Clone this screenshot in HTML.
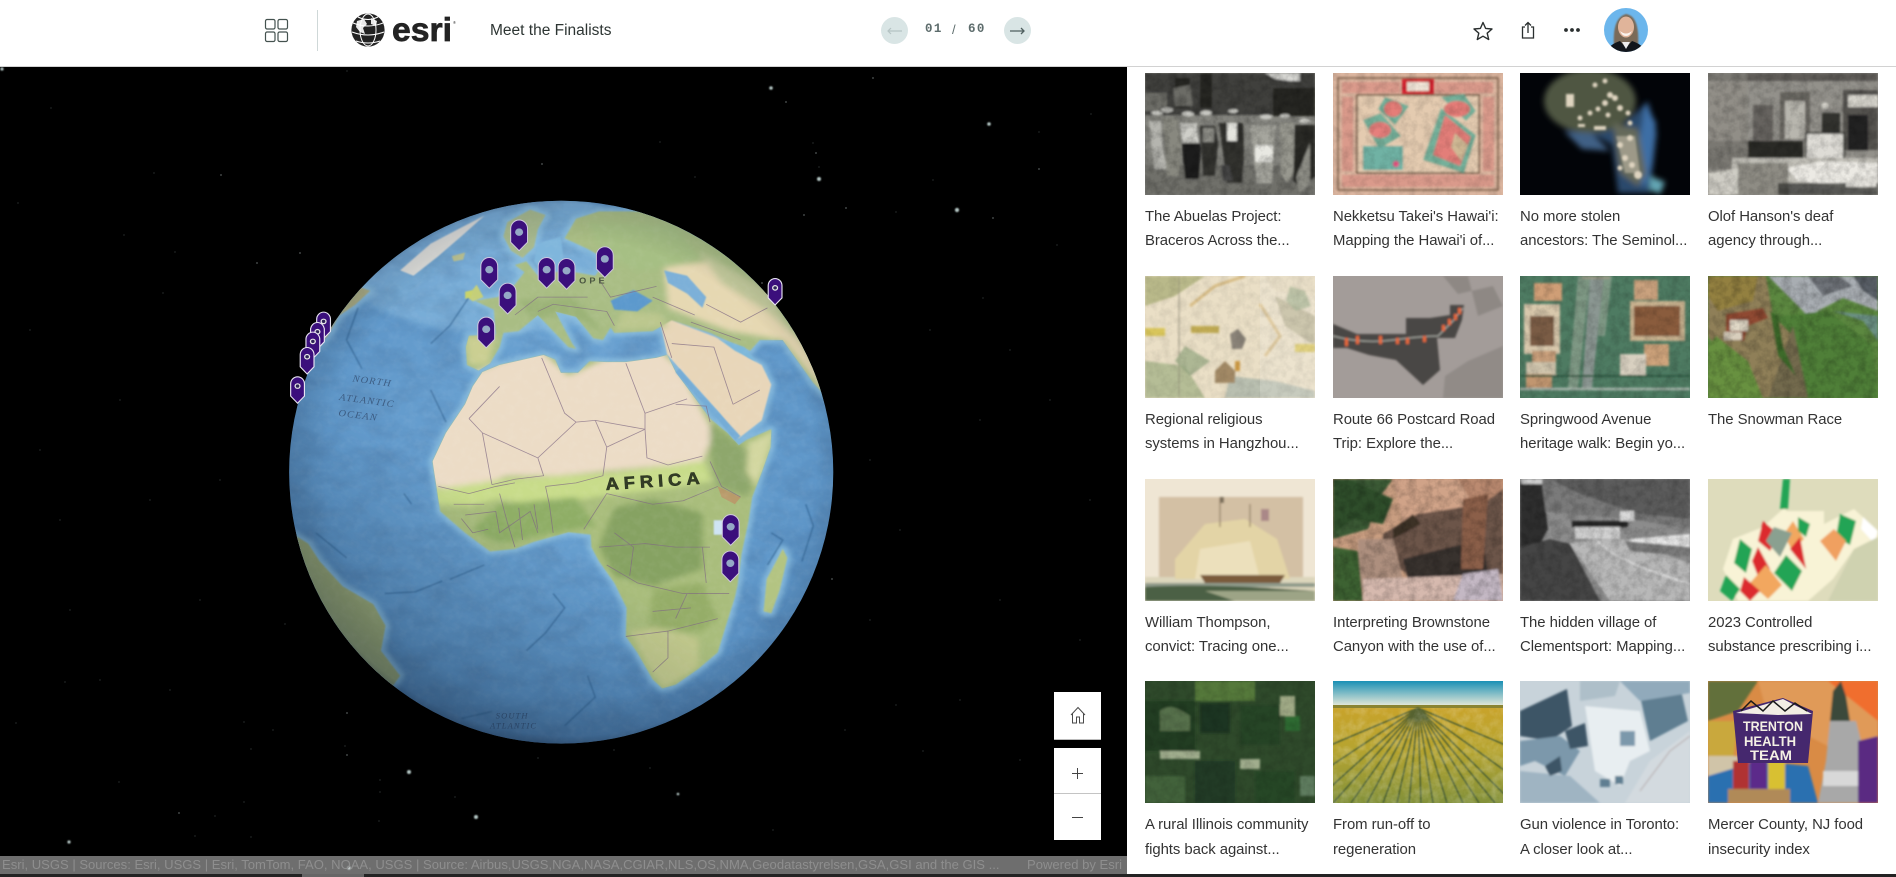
<!DOCTYPE html>
<html lang="en"><head><meta charset="utf-8"><title>Meet the Finalists</title>
<style>
html,body{margin:0;padding:0;width:1896px;height:877px;overflow:hidden;background:#fff;font-family:"Liberation Sans",sans-serif;color:#2b2b2b}
.a{position:absolute}
svg{display:block;overflow:hidden}
.th{position:absolute;width:170px;height:122px}
.t{position:absolute;width:182px;font-size:14.9px;line-height:24px;color:#333;white-space:nowrap;letter-spacing:-.05px}
</style></head><body>
<svg width="0" height="0" class="a"><defs>
<filter id="b" x="-10%" y="-10%" width="120%" height="120%"><feGaussianBlur stdDeviation="1"/></filter>
<filter id="b3" x="-20%" y="-20%" width="140%" height="140%"><feGaussianBlur stdDeviation="3"/></filter>
<filter id="b8" x="-20%" y="-20%" width="140%" height="140%"><feGaussianBlur stdDeviation="8"/></filter>
<filter id="gb" x="-20%" y="-20%" width="140%" height="140%"><feGaussianBlur stdDeviation="2"/></filter>
<filter id="gb6" x="-20%" y="-20%" width="140%" height="140%"><feGaussianBlur stdDeviation="7"/></filter>
<filter id="sg" x="-200%" y="-200%" width="500%" height="500%"><feGaussianBlur stdDeviation=".8"/></filter>
<filter id="n" x="0" y="0" width="100%" height="100%"><feTurbulence type="fractalNoise" baseFrequency=".12" numOctaves="3" seed="4"/><feColorMatrix values="0 0 0 0 0 0 0 0 0 0 0 0 0 0 0 1.2 0 0 0 -.42"/></filter>
<filter id="nl" x="0" y="0" width="100%" height="100%"><feTurbulence type="fractalNoise" baseFrequency=".12" numOctaves="3" seed="9"/><feColorMatrix values="0 0 0 0 1 0 0 0 0 1 0 0 0 0 1 1.2 0 0 0 -.42"/></filter>
<filter id="ng" x="0" y="0" width="100%" height="100%"><feTurbulence type="fractalNoise" baseFrequency=".012 .018" numOctaves="4" seed="7"/><feColorMatrix values="0 0 0 0 .05 0 0 0 0 .12 0 0 0 0 .25 1.6 0 0 0 -.6"/></filter>
<filter id="ng2" x="0" y="0" width="100%" height="100%"><feTurbulence type="fractalNoise" baseFrequency=".05" numOctaves="3" seed="21"/><feColorMatrix values="0 0 0 0 1 0 0 0 0 1 0 0 0 0 1 1.4 0 0 0 -.55"/></filter>
</defs></svg>

<!-- MAP -->
<div class="a" style="left:0;top:66px;width:1127px;height:811px;background:#000;overflow:hidden">
<svg class="a" style="left:0;top:-66px" width="1127" height="877" viewBox="0 0 1127 877">
<path fill="none" stroke="#5e6a6a" stroke-width="1" stroke-linecap="round" d="M347 71h0M873 78h0M813 143h0M816 153h0M819 167h0M933 180h0M846 208h0M896 212h0M804 215h0M660 142h0M695 177h0M51 108h0M154 173h0M18 203h0M124 235h0M175 252h0M163 293h0M1091 114h0M1039 132h0M1039 169h0M993 218h0M1057 245h0M983 298h0M16 723h0M65 682h0M119 782h0M195 836h0M251 837h0M244 802h0M244 722h0M273 730h0M251 749h0M345 746h0M347 755h0M380 780h0M380 792h0M455 797h0M379 821h0M215 816h0M538 758h0M614 750h0M650 768h0M896 705h0M845 730h0M923 751h0M773 830h0M910 862h0M285 624h0M870 460h0M900 530h0M1000 600h0M1050 400h0M1090 500h0M960 700h0M1020 760h0M120 400h0M60 520h0M200 600h0M30 330h0M220 480h0M100 680h0M40 450h0M150 500h0M980 420h0M930 330h0M1010 350h0M870 620h0M1080 640h0M70 610h0M170 690h0"/>
<path fill="none" stroke="#a4b0b0" stroke-width="1.2" stroke-linecap="round" d="M786 102h0M542 164h0M221 175h0M300 253h0M257 263h0M873 78h0M179 813h0M347 713h0M347 755h0M804 215h0M846 208h0M832 579h0M762 283h0M993 218h0M1039 169h0M816 153h0"/>
<g fill="#b4c6c4" filter="url(#sg)"><circle cx="771" cy="88" r="1.8"/><circle cx="819" cy="179" r="2"/><circle cx="989" cy="124" r="1.8"/><circle cx="957" cy="210" r="2.1"/><circle cx="409" cy="772" r="2"/><circle cx="476" cy="817" r="2"/><circle cx="69" cy="842" r="1.6"/><circle cx="678" cy="794" r="1.3"/><circle cx="349" cy="868" r="1.6"/><circle cx="2" cy="69" r="1.6"/></g>
</svg>

<!-- GLOBE -->
<svg class="a" style="left:270px;top:124px" width="600" height="560" viewBox="0 0 1568 1568" preserveAspectRatio="none">
<defs>
<radialGradient id="oc" cx=".5" cy=".42" r=".62"><stop offset="0" stop-color="#6ea5d4"/><stop offset=".65" stop-color="#6098ca"/><stop offset="1" stop-color="#4d80b2"/></radialGradient>
<radialGradient id="limb" cx=".5" cy=".5" r=".5"><stop offset="0" stop-color="#000" stop-opacity="0"/><stop offset=".82" stop-color="#000" stop-opacity="0"/><stop offset=".95" stop-color="#152238" stop-opacity=".14"/><stop offset="1" stop-color="#152238" stop-opacity=".5"/></radialGradient>
<linearGradient id="dk" x1=".75" y1=".15" x2=".2" y2="1"><stop offset=".55" stop-color="#0d2036" stop-opacity="0"/><stop offset="1" stop-color="#0d2036" stop-opacity=".38"/></linearGradient>
<clipPath id="gc"><ellipse cx="761" cy="790" rx="711" ry="760"/></clipPath>
<path id="af" d="M555 510L600 490 650 478 715 462 745 475 760 512 805 512 835 480 880 482 930 482 1010 470 1038 462 1060 510 1105 575 1150 640 1195 680 1225 715 1245 700 1310 670 1308 720 1285 790 1260 860 1250 930 1232 1020 1222 1105 1215 1140 1190 1225 1170 1295 1120 1340 1060 1385 1025 1395 1000 1370 960 1295 930 1250 932 1170 900 1100 860 1040 840 1000 838 965 780 958 690 985 640 1005 575 1012 510 960 445 900 435 830 425 760 460 680 510 600 530 550Z"/>
<path id="ara" d="M1038 460L1100 535 1175 625 1225 695 1285 645 1310 545 1285 490 1250 470 1200 430 1160 410 1050 365 1020 370Z"/>
<path id="eu" d="M512 440L520 408 590 405 585 335 535 310 595 300 640 265 665 230 640 210 670 200 700 240 770 225 850 240 880 195 830 165 770 135 800 80 860 60 1000 60 1200 180 1320 280 1420 430 1490 620 1420 540 1380 480 1340 420 1280 420 1255 450 1200 425 1150 400 1050 365 1025 380 1000 395 900 400 890 385 870 420 845 415 800 355 745 340 790 430 800 445 780 440 700 350 650 395 610 400 600 440 575 485 545 505 515 490Z"/>
<path id="sw" d="M620 90L680 55 720 70 700 110 690 160 660 190 630 170 610 130Z"/>
<path id="sa" d="M40 950L100 990 130 1040 190 1110 270 1160 302 1220 290 1290 340 1360 300 1420 100 1300 30 1100Z"/>
<path id="na" d="M130 390L170 330 230 270 262 282 222 322 180 352 150 410 120 440Z"/>
<path id="gr" d="M340 225L420 150 500 105 560 72 505 125 440 185 375 240Z"/>
<path id="mg" d="M1290 1180L1298 1090 1340 1005 1352 1030 1332 1120 1310 1185Z"/>
<clipPath id="lc"><use href="#af"/><use href="#ara"/><use href="#eu"/></clipPath>
</defs>
<g clip-path="url(#gc)">
<rect width="1568" height="1568" fill="url(#oc)"/>
<ellipse cx="600" cy="200" rx="420" ry="200" fill="#8bbce0" opacity=".55" filter="url(#b8)"/>
<rect width="1568" height="1568" filter="url(#ng)" opacity=".3"/>
<g filter="url(#gb6)" fill="#9acbe6" stroke="#8cc0e0" stroke-width="22" stroke-linejoin="round" opacity=".8">
<use href="#af"/><use href="#ara"/><use href="#eu"/><use href="#sw"/><use href="#sa"/><use href="#na"/><use href="#mg"/>
</g>
<g fill="none" stroke="#2f608f" stroke-width="4" opacity=".6" filter="url(#gb)">
<path d="M830 1360L850 1420 800 1470 770 1500M740 1130L770 1170 720 1240 670 1290M1180 1400L1150 1480M1310 960L1340 980 1300 1050M1400 880L1420 940 1390 1040M450 1095L380 1125 300 1130M350 850L370 880M520 300L470 380 420 430M230 330L200 420 240 500M420 560L460 650M200 1030L120 960M500 1480L580 1460M470 1090L560 1050"/>
</g>
<g filter="url(#gb)">
<use href="#af" fill="#a9bd7c"/>
<use href="#ara" fill="#e8d6b9"/>
<use href="#eu" fill="#a9bd84"/>
<use href="#sw" fill="#a7b98e"/>
<use href="#sa" fill="#98a672"/>
<use href="#na" fill="#a9aa80"/>
<use href="#gr" fill="#dededa"/>
<use href="#mg" fill="#b3c482"/>
<path d="M515 300L540 265 558 300 530 312Z" fill="#c5cf78"/>
<path d="M510 285L530 280 525 300 510 305Z" fill="#c9d36b"/>
<path d="M475 185L510 175 505 195 480 200Z" fill="#b8bf90"/>
<path d="M1160 925h32v40h-32z" fill="#cfe4f4"/>
</g>
<g clip-path="url(#lc)"><g filter="url(#b8)">
<path d="M400 560L560 500 700 440 780 520 880 470 1010 440 1070 500 1120 600 1160 680 1130 765 1000 775 900 785 750 800 620 800 520 840 400 830Z" fill="#ecdcc6"/>
<path d="M420 840L620 808 900 792 1135 758 1155 815 1050 835 880 855 700 885 600 865 520 885 430 880Z" fill="#c8dc8a"/>
<path d="M860 1000L900 890 1000 865 1130 905 1130 1060 1000 1110 900 1080Z" fill="#86a262"/>
<path d="M600 880L800 860 850 940 700 970 600 990 530 950Z" fill="#8fae66"/>
<path d="M940 1235L1010 1225 1120 1255 1120 1335 1030 1400 990 1340Z" fill="#c2c98c"/>
<path d="M1000 1120L1130 1100 1170 1200 1120 1240 990 1220Z" fill="#95ad68"/>
<path d="M1150 650L1240 725 1280 745 1250 860 1170 830 1150 740Z" fill="#8ea76c"/>
<path d="M1250 710L1320 670 1290 780 1270 830 1245 790Z" fill="#d3d7a0"/>
<path d="M1030 215L1150 200 1300 300 1400 440 1490 620 1340 420 1200 395 1100 355 1040 330Z" fill="#e6d8b2"/>
<path d="M920 340L1020 345 1040 385 900 395Z" fill="#bcc78e"/>
<path d="M650 310L800 300 870 400 780 350 680 360Z" fill="#9bb377"/>
<path d="M510 410L590 410 570 490 520 490Z" fill="#cbcf92"/>
<path d="M1120 170L1300 280 1380 420 1300 340 1180 260Z" fill="#c4cb9c"/>
<path d="M830 90L1060 100 1130 200 960 230 860 160Z" fill="#a6bf84"/>
</g></g>
<path d="M890 310L950 280 1000 310 960 340 900 335Z" fill="#5b99cd" filter="url(#gb)"/>
<path d="M1030 225L1090 240 1140 300 1130 330 1090 290 1040 260Z" fill="#7cb0d8" filter="url(#gb)"/>
<path d="M1170 415L1240 440 1270 480 1215 450Z" fill="#7db8da" filter="url(#gb)"/>
<path d="M1060 510L1100 560 1160 630 1215 700 1230 690 1170 620 1110 550 1070 500Z" fill="#74acd6" filter="url(#gb)"/>
<path d="M700 150L760 130 770 220 715 235 690 200Z" fill="#7fb6dc" filter="url(#gb)"/>
<g fill="none" stroke="#806a82" stroke-width="2.2" opacity=".72">
<path d="M520 640L555 680 700 750 715 800 640 810 580 825M555 680L580 825M520 640L600 550M700 750L800 650 850 645 980 670 980 625 1090 585M710 470L770 625 800 650M930 485L980 625M850 645L880 720 870 800 800 820 720 830M880 720L980 670 985 750 1040 770 1130 745M1060 600L1140 605 1150 650M1150 760L1180 830 1230 860M440 830L520 850 590 830 640 820M720 830L730 880 740 960M600 850L620 930 640 1000M510 910L590 900 600 960 680 900 700 960M820 950L880 850 1000 880 1080 870 1170 830M860 1000L980 990 1060 1000 1150 1000M880 1050L960 1100 1080 1130 1200 1130M930 1250L1040 1235 1170 1200M1040 1235L1040 1310 1000 1350M1090 1130L1060 1200M1020 370L1050 470M1050 430L1160 440 1210 600M1210 600L1280 560M1100 370L1230 420M700 340L740 320 880 340 900 380M640 350L700 300 830 300M860 250L890 300 1010 270M1000 300L1110 350M1140 320L1230 370 1300 330M500 920L530 960 570 950M650 890L660 980M690 880L700 950M900 960L950 1000 940 1080M1130 1000L1140 1100M1000 1180L1100 1170M480 880L560 880"/>
</g>
<path d="M1170 830L1230 860 1215 880 1180 860Z" fill="#c97a5a" opacity=".5"/>
<rect width="1568" height="1568" filter="url(#ng2)" opacity=".08"/>
<text transform="rotate(-4 880 840)" x="878" y="840" font-family="'Liberation Sans',sans-serif" font-weight="700" font-size="48" letter-spacing="13" fill="#333d26" stroke="#2a3320" stroke-width="1.6">AFRICA</text>
<g font-family="'Liberation Serif',serif" font-style="italic" font-size="27" fill="#2f4668" letter-spacing="3" opacity=".72">
<text x="215" y="536" transform="rotate(8 215 536)">NORTH</text>
<text x="180" y="588" transform="rotate(8 180 588)">ATLANTIC</text>
<text x="178" y="632" transform="rotate(8 178 632)">OCEAN</text>
<text x="590" y="1480" font-size="22">SOUTH</text>
<text x="575" y="1508" font-size="22">ATLANTIC</text>
</g>
<text x="808" y="262" font-family="'Liberation Sans',sans-serif" font-weight="700" font-size="24" letter-spacing="8" fill="#4a5540">OPE</text>
<rect width="1568" height="1568" fill="url(#dk)"/>
<rect width="1568" height="1568" fill="url(#limb)"/>
</g>
<!-- pins -->
<defs>
<g id="pin"><path d="M-22 -62A22 24 0 0 1 22 -62V-24L0 0-22-24Z" fill="#3b0f7c" stroke="#cfc8e0" stroke-width="2.6"/><circle cy="-52" r="10.5" fill="#95a9c6"/></g>
<g id="pin2"><path d="M-18 -54A18 20 0 0 1 18 -54V-20L0 0-18-20Z" fill="#3b0f7c" stroke="#e8e4f2" stroke-width="3"/><circle cy="-48" r="8" fill="#e8e8e8"/><circle cy="-48" r="4.6" fill="#2e2458"/></g>
</defs>
<use href="#pin" x="651" y="170"/><use href="#pin" x="573" y="275"/><use href="#pin" x="621" y="347"/><use href="#pin" x="565" y="442"/><use href="#pin" x="723" y="275"/><use href="#pin" x="775" y="278"/><use href="#pin" x="875" y="245"/><use href="#pin" x="1204" y="995"/><use href="#pin" x="1203" y="1097"/>
<use href="#pin2" x="1320" y="322"/><use href="#pin2" x="140" y="416"/><use href="#pin2" x="124" y="445"/><use href="#pin2" x="112" y="472"/><use href="#pin2" x="97" y="515"/><use href="#pin2" x="72" y="597"/>
</svg>

<!-- attribution -->
<div class="a" style="left:0;top:790px;width:1127px;height:18px;background:rgba(255,255,255,.43);font-size:13.05px;line-height:18px;color:#8e8e8e;white-space:nowrap;overflow:hidden"><span class="a" style="left:2px;top:0">Esri, USGS | Sources: Esri, USGS | Esri, TomTom, FAO, NOAA, USGS | Source: Airbus,USGS,NGA,NASA,CGIAR,NLS,OS,NMA,Geodatastyrelsen,GSA,GSI and the GIS ...</span><span class="a" style="right:5px;top:0">Powered by Esri</span></div>

<!-- controls -->
<div class="a" style="left:1054px;top:626px;width:47px;height:47px;background:#fff;border-bottom:1px solid #bbb"></div>
<svg class="a" style="left:1068px;top:639px" width="20" height="20" viewBox="0 0 20 20" fill="none" stroke="#4a4a4a" stroke-width="1"><path d="M3 10L10 2.5 17 10M4.5 8.5V18h4v-6h3v6h4V8.5"/></svg>
<div class="a" style="left:1054px;top:682px;width:47px;height:92px;background:#fff"></div>
<div class="a" style="left:1054px;top:727px;width:47px;height:1px;background:#c4c4c4"></div>
<div class="a" style="left:1072px;top:707px;width:11px;height:1px;background:#444"></div>
<div class="a" style="left:1077px;top:702px;width:1px;height:11px;background:#444"></div>
<div class="a" style="left:1072px;top:751px;width:11px;height:1px;background:#444"></div>
</div>

<!-- HEADER -->
<div class="a" style="left:0;top:0;width:1896px;height:66px;background:#fff;border-bottom:1px solid #d2d2d2;box-sizing:content-box"></div>
<svg class="a" style="left:264px;top:18px" width="25" height="25" viewBox="0 0 25 25" fill="none" stroke="#44524f" stroke-width="1.2"><rect x="1.5" y="1.5" width="9.5" height="9.5" rx="1.6"/><rect x="14" y="1.5" width="9.5" height="9.5" rx="1.6"/><rect x="1.5" y="14" width="9.5" height="9.5" rx="1.6"/><rect x="14" y="14" width="9.5" height="9.5" rx="1.6"/></svg>
<div class="a" style="left:317px;top:10px;width:1px;height:41px;background:#cfd8d8"></div>
<svg class="a" style="left:350px;top:10px" width="110" height="42" viewBox="0 0 110 42">
<circle cx="18" cy="20" r="16.6" fill="#232323"/>
<g fill="none" stroke="#fff" stroke-width="1"><ellipse cx="18" cy="20" rx="8" ry="16"/><path d="M3 13Q18 19 33 13M2 22Q18 28 34 22M8 7Q18 12 28 7M6 31Q18 35 30 31"/></g>
<path d="M7 11L14 9 17 14 13 18 15 24 10 22 6 17ZM21 8L27 11 26 16 21 14Z" fill="#fff" opacity=".9"/>
<text x="42" y="31" font-family="'Liberation Sans',sans-serif" font-weight="700" font-size="33" fill="#232323" stroke="#232323" stroke-width=".7" textLength="60" lengthAdjust="spacingAndGlyphs">esri</text>
<text x="103" y="14" font-size="4" fill="#232323" font-family="'Liberation Sans',sans-serif">®</text>
</svg>
<div class="a" style="left:490px;top:21px;font-size:15.5px;line-height:20px;color:#2d3533;white-space:nowrap">Meet the Finalists</div>

<div class="a" style="left:881px;top:17px;width:27px;height:27px;border-radius:50%;background:#d9e5e5"></div>
<svg class="a" style="left:881px;top:17px" width="27" height="27" viewBox="0 0 27 27" fill="none" stroke="#b5c4c4" stroke-width="1.2"><path d="M21 14H7M10 11L7 14 10 17"/></svg>
<div class="a" style="left:925px;top:21px;font-family:'Liberation Mono',monospace;font-weight:700;font-size:12.5px;line-height:17px;color:#5d6c6c;letter-spacing:1.4px;white-space:pre">01</div>
<div class="a" style="left:952px;top:21px;font-size:13px;line-height:17px;color:#5d6c6c">/</div>
<div class="a" style="left:968px;top:21px;font-family:'Liberation Mono',monospace;font-weight:700;font-size:12.5px;line-height:17px;color:#5d6c6c;letter-spacing:1.4px">60</div>
<div class="a" style="left:1004px;top:17px;width:27px;height:27px;border-radius:50%;background:#d9e5e5"></div>
<svg class="a" style="left:1004px;top:17px" width="27" height="27" viewBox="0 0 27 27" fill="none" stroke="#4f5f5f" stroke-width="1.3"><path d="M6 14H20M17 11L20 14 17 17"/></svg>

<svg class="a" style="left:1472px;top:20px" width="22" height="22" viewBox="0 0 22 22" fill="none" stroke="#2a2f2f" stroke-width="1.4" stroke-linejoin="round"><path d="M11 2.5L13.6 8.4 20 9 15.2 13.2 16.7 19.5 11 16.2 5.3 19.5 6.8 13.2 2 9 8.4 8.4Z"/></svg>
<svg class="a" style="left:1518px;top:20px" width="20" height="20" viewBox="0 0 20 20" fill="none" stroke="#2a2f2f" stroke-width="1.3"><path d="M7 7H4.5V18H15.5V7H13M10 13V2.5M7 5.5L10 2.5 13 5.5"/></svg>
<svg class="a" style="left:1562px;top:25px" width="20" height="10" viewBox="0 0 20 10" fill="#2a2f2f"><circle cx="4" cy="5" r="1.9"/><circle cx="10" cy="5" r="1.9"/><circle cx="16" cy="5" r="1.9"/></svg>
<svg class="a" style="left:1604px;top:8px" width="44" height="44" viewBox="0 0 44 44">
<defs><clipPath id="av"><circle cx="22" cy="22" r="22"/></clipPath></defs>
<g clip-path="url(#av)"><rect width="44" height="44" fill="#6cb6ec"/>
<path d="M10 38Q8 10 22 6 36 8 34 38Z" fill="#7a6a58" filter="url(#sg)"/>
<ellipse cx="22" cy="19" rx="8" ry="10.5" fill="#e0b49a"/>
<path d="M16 23Q22 28 28 23 26 28 22 28 18 28 16 23Z" fill="#fbf4ee"/>
<path d="M2 44Q6 36 16 33L22 40 28 33Q38 36 42 44Z" fill="#12161c"/>
<path d="M18 34L22 41 26 34Z" fill="#eee"/></g></svg>

<!-- PANEL -->
<div class="a" style="left:1127px;top:67px;width:769px;height:807px;background:#fff"></div>
<div class="a" style="left:0;top:874px;width:1896px;height:3px;background:#232323"></div>
<div class="a" style="left:302px;top:874px;width:62px;height:3px;background:#666"></div>

<!-- ROW 1 -->
<svg class="th" style="left:1145px;top:73px" viewBox="0 0 170 122"><rect width="170" height="122" fill="#84847e"/><g filter="url(#b)"><rect width="170" height="42" fill="#3f3f3c"/><path d="M120 0H155V8H145L130 6Z" fill="#d8d8d4"/><path d="M30 5h15v30H30zM55 0h12v35H55zM128 15h42v28h-42z" fill="#252523"/><path d="M28 15L45 12 48 33 30 33ZM0 20h22v18H0z" fill="#6c6c66"/><rect y="92" width="170" height="30" fill="#70706a"/>
<g fill="#c8c8c2"><ellipse cx="12" cy="40" rx="6" ry="2"/><ellipse cx="22" cy="37" rx="6" ry="2.5"/><ellipse cx="43" cy="41" rx="6" ry="2.5"/><ellipse cx="61" cy="40" rx="6" ry="2.5"/><ellipse cx="88" cy="38" rx="5" ry="2"/><ellipse cx="121" cy="44" rx="6" ry="2.5"/><ellipse cx="140" cy="43" rx="5" ry="2"/><ellipse cx="160" cy="48" rx="6" ry="2.5"/></g>
<path d="M4 48h12l2 28 4 20H10L6 70Z" fill="#b5b5af"/><path d="M18 45h14l4 22 -2 36H22Z" fill="#88887f"/><path d="M35 50h17l4 26-2 30H40Z" fill="#1f1f1d"/><path d="M35 50h17l2 20H37Z" fill="#cfcfc9"/><path d="M55 53h15l3 18-3 32H58Z" fill="#33332f"/><path d="M58 55h11v14H58z" fill="#8f8f88"/><path d="M74 50h24l1 36-2 24H82Z" fill="#33332f"/><path d="M82 50h10v18H82z" fill="#e4e4de"/><path d="M105 52h26l-2 18 -2 40H112Z" fill="#a6a69e"/><rect x="110" y="72" width="18" height="17" rx="2" fill="#e8e8e2"/><path d="M135 50h13l2 50-8 10-6-10Z" fill="#98988f"/><path d="M150 52h20v52l-14 10-8-6Z" fill="#2a2a28"/><path d="M165 70v42l-10 8-4-16Z" fill="#8e8e86"/><path d="M76 92h8l4 16h-10Z" fill="#444"/></g><rect width="170" height="122" filter="url(#n)" opacity=".35"/></svg>

<svg class="th" style="left:1333px;top:73px" viewBox="0 0 170 122"><rect width="170" height="122" fill="#dcb6a0"/><g filter="url(#b)"><rect x="5" y="5" width="160" height="112" fill="none" stroke="#7c5f48" stroke-width="1.5"/>
<g fill="#d98c80" opacity=".65"><rect x="9" y="9" width="58" height="11"/><rect x="102" y="9" width="58" height="11"/><rect x="9" y="24" width="11" height="74"/><rect x="150" y="24" width="11" height="74"/><rect x="9" y="102" width="152" height="12"/></g>
<rect x="24" y="22" width="122" height="78" fill="#e4cbb0" stroke="#5c3f2a" stroke-width="1.4"/>
<rect x="69" y="6" width="32" height="15" fill="#d3242e"/><rect x="74" y="9" width="22" height="9" fill="#f3e7d9"/>
<path d="M52 24L76 33 62 52 45 36Z" fill="#72b09a"/><ellipse cx="60" cy="36" rx="9" ry="8" fill="#e57d78"/>
<path d="M30 47L48 40 68 63 46 76Z" fill="#74b09a"/><ellipse cx="47" cy="57" rx="11" ry="8" fill="#e67f7c"/>
<path d="M108 35L143 62 131 100 90 87Z" fill="#74b09a"/><path d="M112 42L138 64 127 93 100 82Z" fill="#e37e79"/><path d="M122 60L135 72 128 88 118 74Z" fill="#cfb894"/>
<path d="M108 24L131 21 143 38 133 48Z" fill="#74b09a"/><ellipse cx="124" cy="36" rx="13" ry="8" fill="#e57d78"/>
<rect x="30" y="73" width="40" height="24" fill="#70b2a4"/><circle cx="63" cy="91" r="3" fill="#e58"/></g><rect width="170" height="122" filter="url(#n)" opacity=".2"/></svg>

<svg class="th" style="left:1520px;top:73px" viewBox="0 0 170 122"><rect width="170" height="122" fill="#020408"/><g filter="url(#b3)"><path d="M42 56L68 58 92 72 98 120 130 120 137 60 128 28 100 55Z" fill="#2c4a6c"/><path d="M44 58L72 60 90 78 62 76Z" fill="#3f6085"/><path d="M125 30L136 50 132 90 125 115 115 100Z" fill="#3d6ea5"/><ellipse cx="70" cy="28" rx="46" ry="32" fill="#4f5642"/><path d="M93 50L118 56 126 100 118 113 100 100Z" fill="#65695a"/><path d="M130 103l15 6-5 12-10-4Z" fill="#63a6b4"/></g><g fill="#dfd4c0" filter="url(#b)"><rect x="46" y="21" width="8" height="13"/><circle cx="85" cy="8" r="2.5"/><circle cx="75" cy="12" r="2.5"/><circle cx="90" cy="22" r="3"/><circle cx="85" cy="30" r="3"/><circle cx="78" cy="36" r="2.5"/><circle cx="70" cy="40" r="2.5"/><circle cx="95" cy="25" r="3"/><circle cx="100" cy="35" r="3"/><circle cx="108" cy="40" r="2.5"/><circle cx="88" cy="42" r="2.5"/><circle cx="60" cy="45" r="2.5"/><rect x="58" y="51" width="7" height="3"/><rect x="74" y="53" width="12" height="4"/><circle cx="110" cy="50" r="2.5"/><circle cx="110" cy="65" r="3"/><circle cx="100" cy="72" r="3"/><circle cx="105" cy="85" r="3"/><circle cx="112" cy="92" r="3"/><circle cx="118" cy="102" r="4"/><circle cx="100" cy="95" r="2.5"/><path d="M96 63L115 63 120 100 105 100Z" fill-opacity=".45"/></g></svg>

<svg class="th" style="left:1708px;top:73px" viewBox="0 0 170 122"><rect width="170" height="122" fill="#93918b"/><g filter="url(#b)"><rect width="170" height="8" fill="#5e5c58"/><rect width="40" height="96" fill="#7a7872"/><rect y="8" width="40" height="60" fill="#a8a49c" opacity=".5"/><path d="M45 32h20v45H45z" fill="#66645e"/><path d="M72 19h30v48H72z" fill="#6a6862"/><path d="M77 28h20v38H77z" fill="#b8b6ae"/><path d="M135 17h35v60h-35z" fill="#55534f"/><path d="M140 22h30v12h-30z" fill="#d5d3cb"/><path d="M140 42h20v35h-20z" fill="#242422"/><circle cx="117" cy="33" r="3.5" fill="#d5d3cb"/><rect x="114" y="40" width="18" height="22" fill="#33332f"/><rect x="40" y="68" width="55" height="20" fill="#2a2927"/><rect x="98" y="60" width="38" height="28" fill="#dedcd6" stroke="#33332f" stroke-width="1.5"/><rect x="24" y="85" width="146" height="37" fill="#c0beb6"/><path d="M78 95L115 88 170 90 170 118 90 108Z" fill="#eceae4"/><path d="M0 100L30 96 30 122 0 122Z" fill="#cfcdc5"/><path d="M30 90h50v32H30z" fill="#8e8c84"/><path d="M70 110h100v12H70z" fill="#2e2d2b" opacity=".7"/><path d="M138 108l30-4v10h-30z" fill="#e4e2dc"/></g><rect width="170" height="122" filter="url(#n)" opacity=".3"/></svg>

<!-- ROW 2 -->
<svg class="th" style="left:1145px;top:276px" viewBox="0 0 170 122"><rect width="170" height="122" fill="#eadfc6"/><g filter="url(#b)"><path d="M0 0H60L30 20 0 30Z" fill="#b9b98a"/><path d="M0 85L40 90 60 122H0Z" fill="#b5bd96"/><path d="M130 20L170 40V70L140 50Z" fill="#bfb89a"/><path d="M120 0H170V20L130 15Z" fill="#e6dabe"/><path d="M85 100L130 105 170 115V122H80Z" fill="#b9bfb0"/><rect x="0" y="52" width="20" height="8" fill="#d8c55a"/><rect x="46" y="50" width="28" height="7" fill="#c3ad55"/><rect x="150" y="68" width="20" height="8" fill="#d8c55a"/><path d="M34 0V122" stroke="#8d8775" stroke-width=".8"/><path d="M45 30L70 10 100 0M115 28L135 60 120 80" stroke="#d7bc85" stroke-width="3" fill="none"/><path d="M70 95l10-10 10 10 0 12h-20Z" fill="#a38a66"/><path d="M145 10l15 5 6 15-15 5-10-10ZM40 70l25 15-20 15-15-15Z" fill="#93a57f" opacity=".7"/><path d="M85 58l8-5 8 10-4 10h-10Z" fill="#8a8378"/><rect x="90" y="85" width="5" height="10" fill="#c94"/></g><rect x="115" y="0" width="55" height="122" fill="#f4f0e6" opacity=".25"/><rect width="170" height="122" filter="url(#n)" opacity=".12"/></svg>

<svg class="th" style="left:1333px;top:276px" viewBox="0 0 170 122"><rect width="170" height="122" fill="#a39c99"/><g filter="url(#b)"><path d="M110 0L125 18 160 10 170 30 145 40 135 0Z" fill="#8e8884"/><path d="M112 100L135 85 170 70V122H110Z" fill="#918b87"/><path d="M0 48L24 58L73 58L73 42L97 42L117 39L117 29L131 29L129 44L122 62L104 62L107 94L90 109L63 84L36 79L14 72L0 72Z" fill="#4a4644"/><path d="M0 60Q30 68 60 64T105 60L120 45 130 32" fill="none" stroke="#b5b8b0" stroke-width="1"/><g fill="#e8693a"><rect x="12" y="62" width="3" height="8"/><rect x="23" y="60" width="3" height="8"/><rect x="46" y="60" width="3" height="8"/><rect x="63" y="62" width="3" height="6"/><rect x="73" y="62" width="3" height="6"/><rect x="90" y="60" width="3" height="6"/><rect x="109" y="49" width="3" height="6"/><rect x="115" y="43" width="3" height="6"/><rect x="121" y="38" width="3" height="6"/><rect x="125" y="32" width="3" height="6"/></g></g></svg>

<svg class="th" style="left:1520px;top:276px" viewBox="0 0 170 122"><rect width="170" height="122" fill="#4e7b62"/><g filter="url(#b)"><path d="M70 0H84L72 112H62Z" fill="#8b9792"/><path d="M58 0H70L58 112H48ZM84 0H92L85 60H78Z" fill="#a6aea0" opacity=".55"/><path d="M62 0V3H90V0" fill="#9a9a86"/><rect x="14" y="7" width="28" height="18" fill="#cf9e76"/><rect x="4" y="28" width="36" height="50" fill="#d8c8ac"/><rect x="10" y="40" width="24" height="30" fill="#7a5c45"/><rect x="114" y="4" width="24" height="20" fill="#caa27e"/><rect x="110" y="25" width="55" height="40" fill="#c9b290"/><rect x="114" y="30" width="46" height="30" fill="#8a5c3c"/><rect x="12" y="75" width="24" height="20" fill="#caa07c"/><rect x="124" y="68" width="25" height="22" fill="#cfa47c"/><rect x="100" y="78" width="26" height="22" fill="#d8d0c0"/><rect x="6" y="86" width="30" height="14" fill="#cfc4ac"/><rect x="6" y="98" width="26" height="14" fill="#c19670"/><path d="M0 113H170" stroke="#a8b5ac" stroke-width="2.5"/><path d="M0 100H170" stroke="#2e5a42" stroke-width="2"/></g><rect width="170" height="122" filter="url(#n)" opacity=".25"/></svg>

<svg class="th" style="left:1708px;top:276px" viewBox="0 0 170 122"><rect width="170" height="122" fill="#5c8840"/><g filter="url(#b)"><path d="M60 0H170V35L135 22 100 40Z" fill="#a8adb2"/><path d="M100 0h30l15 10-30 10Z" fill="#6e7278"/><path d="M145 0h25v25l-15-10Z" fill="#5a6068"/><path d="M70 40L120 35 165 70 170 122H100Z" fill="#4f7f38"/><path d="M125 35L155 45 170 65V40Z" fill="#6b8f82"/><path d="M0 0H58L65 40 85 60 80 122H50L20 90 0 60Z" fill="#8f7f58"/><path d="M0 0H50L45 25 10 35 0 20Z" fill="#93803f"/><path d="M8 60L40 85 55 122H0V70Z" fill="#679141"/><path d="M60 122L85 50 100 122Z" fill="#736a4e"/><path d="M18 38L55 32 60 42 40 50 36 65 18 62Z" fill="#8f4a33"/><rect x="22" y="44" width="18" height="11" fill="#e0d8c6"/><rect x="16" y="56" width="18" height="8" fill="#d8cebc"/><path d="M62 35L70 40 75 70 88 100 70 80Z" fill="#3d6a2c"/></g><rect width="170" height="122" filter="url(#n)" opacity=".35"/></svg>

<!-- ROW 3 -->
<svg class="th" style="left:1145px;top:479px" viewBox="0 0 170 122"><rect width="170" height="122" fill="#efe6d4"/><g filter="url(#b)"><path d="M14 18H158V98H14Z" fill="#d3c0a4"/><path d="M0 98H170V122H0Z" fill="#dcd6bc"/><path d="M30 80L60 45 100 40 132 60 145 100H30Z" fill="#e3d4a6"/><path d="M55 70L105 62 115 100H50Z" fill="#ece0bc"/><path d="M75 18V48M105 25V48" stroke="#8e7a60" stroke-width="1.2"/><rect x="75" y="18" width="4" height="6" fill="#7c6e5a"/><rect x="116" y="30" width="8" height="12" fill="#a88"/><path d="M55 96H140L135 104H60Z" fill="#7a5a3a"/><path d="M0 104H170V108H0Z" fill="#8f9a8a"/><path d="M0 108Q60 104 170 112V122H0Z" fill="#4c6044"/><path d="M60 112L170 112V122H90Z" fill="#c0c2a2" opacity=".7"/></g></svg>

<svg class="th" style="left:1333px;top:479px" viewBox="0 0 170 122"><rect width="170" height="122" fill="#c89d80"/><g filter="url(#b)"><path d="M60 0H170V60L120 40 70 45Z" fill="#d0a388"/><path d="M125 0H170V30L140 25Z" fill="#bb8a70"/><path d="M50 55L85 35 150 25 170 10 170 100 80 98 50 80Z" fill="#6c5549"/><path d="M70 80L150 60 155 95 75 100Z" fill="#39302e"/><path d="M130 20L155 15 150 90 128 90Z" fill="#8b5f48"/><path d="M60 50L80 35 88 45 60 60Z" fill="#3c3028"/><path d="M0 0H60L45 20 35 50 0 60Z" fill="#3a5a34"/><path d="M0 0H15L60 20 50 45 20 40 0 55Z" fill="#2e4d2a"/><path d="M25 60H60L70 100 25 110Z" fill="#ad8f7e"/><path d="M0 68L25 72 30 122H0Z" fill="#3d6233"/><path d="M30 100L170 95V122H30Z" fill="#d6b9ae"/><path d="M130 95L165 90 170 122H120Z" fill="#c4b8c4"/></g><rect width="170" height="122" filter="url(#n)" opacity=".35"/></svg>

<svg class="th" style="left:1520px;top:479px" viewBox="0 0 170 122"><rect width="170" height="122" fill="#8c8c8c"/><g filter="url(#b)"><path d="M0 0H170V50L110 40 50 35 0 30Z" fill="#7a7a7a"/><path d="M30 0H170V40L120 35 60 15Z" fill="#5c5c5c"/><path d="M0 0H22V5L5 10Z" fill="#cfcfcf"/><path d="M0 5H22L28 50 20 65 0 70Z" fill="#2d2d2d"/><path d="M0 68L30 60 50 65 80 122H0Z" fill="#454545"/><path d="M55 45H100V60H55Z" fill="#d2d2d2"/><path d="M52 42H108V48H52Z" fill="#262626"/><path d="M50 65Q60 60 110 60L170 85V122H90Z" fill="#b8b8b8"/><path d="M78 62Q90 80 170 105" fill="none" stroke="#e0e0e0" stroke-width="1.5"/><path d="M110 60L170 55V70L110 72Z" fill="#e8e8e8"/><path d="M105 62L170 68V78L110 72Z" fill="#7a7a7a"/><rect x="100" y="32" width="14" height="10" fill="#d8d8d8"/></g><rect width="170" height="122" filter="url(#n)" opacity=".3"/></svg>

<svg class="th" style="left:1708px;top:479px" viewBox="0 0 170 122"><rect width="170" height="122" fill="#dedcbc"/><g filter="url(#b)"><path d="M75 0H82L78 32H116V45L146 30 170 52V68L146 70 125 100 100 122H30L15 90 25 60 55 48 75 30Z" fill="#f8f3d6"/><path d="M75 0H82L80 30H72Z" fill="#22a455"/><path d="M132 35L148 42 142 66 128 58Z" fill="#22a455"/><path d="M112 62L126 50 138 62 128 82Z" fill="#f0a060"/><path d="M55 42L70 55 62 72 50 62Z" fill="#dc2a2e"/><path d="M85 42L96 60 84 72 76 55Z" fill="#f2a75e"/><path d="M90 38L102 45 98 58 90 52Z" fill="#22a455"/><path d="M50 68L62 90 52 102 44 82Z" fill="#dc2a2e"/><path d="M78 76L94 92 84 112 66 94Z" fill="#22a455"/><path d="M82 70L92 58 98 90Z" fill="#dc2a2e"/><path d="M58 86L74 106 60 120 42 104Z" fill="#f2a75e"/><path d="M32 60L44 70 38 94 26 84Z" fill="#22a455"/><path d="M18 96L32 110 24 122 12 112Z" fill="#22a455"/><path d="M36 98L52 112 42 122 32 112Z" fill="#dc2a2e"/><path d="M66 48L84 54 72 78 58 62Z" fill="#8aa090"/><path d="M155 38L170 52 166 64 153 50Z" fill="#fff"/><path d="M146 70L170 58 170 122 120 122Z" fill="#cfd2b0"/></g></svg>

<!-- ROW 4 -->
<svg class="th" style="left:1145px;top:681px" viewBox="0 0 170 122"><rect width="170" height="122" fill="#2f4a2b"/><g filter="url(#b)"><rect x="50" y="0" width="60" height="20" fill="#55793a"/><rect x="0" y="20" width="50" height="50" fill="#243e24"/><rect x="55" y="22" width="30" height="30" fill="#1f3620"/><rect x="95" y="24" width="40" height="40" fill="#284528"/><rect x="135" y="15" width="15" height="20" fill="#a0aa86"/><rect x="140" y="35" width="15" height="15" fill="#2d6a30"/><rect x="15" y="70" width="40" height="8" fill="#a0ad8d"/><rect x="95" y="78" width="20" height="10" fill="#a0ad8d"/><path d="M15 30Q25 20 45 35V50H15Z" fill="#56704b"/><rect x="0" y="95" width="40" height="27" fill="#42623a"/><rect x="50" y="80" width="40" height="42" fill="#213b27"/><rect x="110" y="90" width="40" height="32" fill="#284626"/><rect x="155" y="95" width="15" height="20" fill="#5f7d5e"/></g><rect width="170" height="122" filter="url(#n)" opacity=".2"/></svg>

<svg class="th" style="left:1333px;top:681px" viewBox="0 0 170 122"><defs><linearGradient id="sky" x1="0" y1="0" x2="0" y2="1"><stop offset="0" stop-color="#1a90b5"/><stop offset="1" stop-color="#e7e9d8"/></linearGradient><linearGradient id="fld" x1="0" y1="0" x2="0" y2="1"><stop offset="0" stop-color="#c9a32a"/><stop offset=".45" stop-color="#b6a430"/><stop offset="1" stop-color="#83913a"/></linearGradient></defs><rect width="170" height="25" fill="url(#sky)"/><rect y="25" width="170" height="97" fill="url(#fld)"/><rect y="24" width="170" height="3" fill="#8a8432"/><g filter="url(#sg)" stroke="#3a5230" stroke-width="1.5" opacity=".8"><path d="M85 27L-40 80M85 27L-40 110M85 27L-20 122M85 27L0 122M85 27L18 122M85 27L34 122M85 27L50 122M85 27L64 122M85 27L76 122M85 27L88 122M85 27L100 122M85 27L114 122M85 27L130 122M85 27L146 122M85 27L162 122M85 27L180 122M85 27L200 110M85 27L210 80"/></g><rect y="27" width="170" height="95" filter="url(#nl)" opacity=".3"/></svg>

<svg class="th" style="left:1520px;top:681px" viewBox="0 0 170 122"><rect width="170" height="122" fill="#c8d3da"/><g filter="url(#b)"><path d="M0 30L47 8 52 45 30 60 0 55Z" fill="#3c5566"/><path d="M0 60L40 55 60 70 45 95 15 80 0 85Z" fill="#7b98ab"/><path d="M45 50L65 42 68 65 50 68Z" fill="#3c5566"/><path d="M120 15L160 5 168 40 130 60Z" fill="#5e7e91"/><path d="M100 0H170V12L120 20Z" fill="#91aabb"/><path d="M60 0H100L95 15 60 20Z" fill="#aebfc9"/><path d="M65 25L120 30 130 70 110 80 100 105 75 90Z" fill="#e8eef1"/><path d="M130 80L170 50V122H105Z" fill="#d3dadf"/><path d="M0 90L50 95 80 122H0Z" fill="#9fb4c2"/><path d="M25 85L40 75 42 90 30 95Z" fill="#3c5566"/><path d="M80 98h10v8H80ZM95 95h8v8h-8Z" fill="#5e7e91"/><path d="M100 50h15v15h-15Z" fill="#7b98ab"/><path d="M120 110L150 70 170 55" stroke="#b4a8a8" stroke-width="1" fill="none"/></g></svg>

<svg class="th" style="left:1708px;top:681px" viewBox="0 0 170 122"><rect width="170" height="122" fill="#d98b45"/><g filter="url(#b)"><path d="M0 0H50L30 30 0 40Z" fill="#62703a"/><path d="M50 0H170V70L120 65 60 35Z" fill="#e09a58"/><path d="M120 0L170 40V0Z" fill="#f06e2f"/><path d="M0 40H30L25 80H0Z" fill="#c9a83e"/><path d="M0 75L30 75 28 95H0Z" fill="#d0c4a8"/><path d="M0 95L50 80 100 85 110 122H0Z" fill="#2a6fb0"/><rect x="25" y="80" width="16" height="32" fill="#b03030"/><rect x="42" y="80" width="17" height="32" fill="#5c2a8a"/><rect x="60" y="80" width="17" height="32" fill="#d8c030"/><rect x="20" y="108" width="62" height="14" fill="#b08a58"/><path d="M125 10l8-10 5 15 4 25-20 0Z" fill="#3a4a3a"/><path d="M122 40H148L158 80 150 122H110L118 80Z" fill="#a8a8a8"/><path d="M115 90H155V105H115Z" fill="#d8d8d8"/><path d="M150 60L170 55V122H150Z" fill="#5a2a82"/></g><path d="M25 30L75 17 105 30 100 82 30 82Z" fill="#45286e"/><path d="M28 32L75 18 104 33 70 34Z" fill="#f2ede4"/><path d="M33 30l10-10 12 10 10-10 12 10 10-8 12 8" fill="none" stroke="#1a1a1a" stroke-width="1.5"/><text x="35" y="50" font-family="'Liberation Sans',sans-serif" font-size="14" fill="#f4f0e4" font-weight="700" textLength="60" lengthAdjust="spacingAndGlyphs">TRENTON</text><text x="36" y="65" font-family="'Liberation Sans',sans-serif" font-size="14" fill="#f4f0e4" font-weight="700" textLength="52" lengthAdjust="spacingAndGlyphs">HEALTH</text><text x="42" y="79" font-family="'Liberation Sans',sans-serif" font-size="14" fill="#f4f0e4" font-weight="700" textLength="42" lengthAdjust="spacingAndGlyphs">TEAM</text></svg>

<!-- TITLES -->
<div class="t" style="left:1145px;top:205px">The Abuelas Project:<br>Braceros Across the...</div>
<div class="t" style="left:1333px;top:205px">Nekketsu Takei's Hawai'i:<br>Mapping the Hawai'i of...</div>
<div class="t" style="left:1520px;top:205px">No more stolen<br>ancestors: The Seminol...</div>
<div class="t" style="left:1708px;top:205px">Olof Hanson's deaf<br>agency through...</div>
<div class="t" style="left:1145px;top:408px">Regional religious<br>systems in Hangzhou...</div>
<div class="t" style="left:1333px;top:408px">Route 66 Postcard Road<br>Trip: Explore the...</div>
<div class="t" style="left:1520px;top:408px">Springwood Avenue<br>heritage walk: Begin yo...</div>
<div class="t" style="left:1708px;top:408px">The Snowman Race</div>
<div class="t" style="left:1145px;top:611px">William Thompson,<br>convict: Tracing one...</div>
<div class="t" style="left:1333px;top:611px">Interpreting Brownstone<br>Canyon with the use of...</div>
<div class="t" style="left:1520px;top:611px">The hidden village of<br>Clementsport: Mapping...</div>
<div class="t" style="left:1708px;top:611px">2023 Controlled<br>substance prescribing i...</div>
<div class="t" style="left:1145px;top:813px;line-height:25px">A rural Illinois community<br>fights back against...</div>
<div class="t" style="left:1333px;top:813px;line-height:25px">From run-off to<br>regeneration</div>
<div class="t" style="left:1520px;top:813px;line-height:25px">Gun violence in Toronto:<br>A closer look at...</div>
<div class="t" style="left:1708px;top:813px;line-height:25px">Mercer County, NJ food<br>insecurity index</div>
</body></html>
